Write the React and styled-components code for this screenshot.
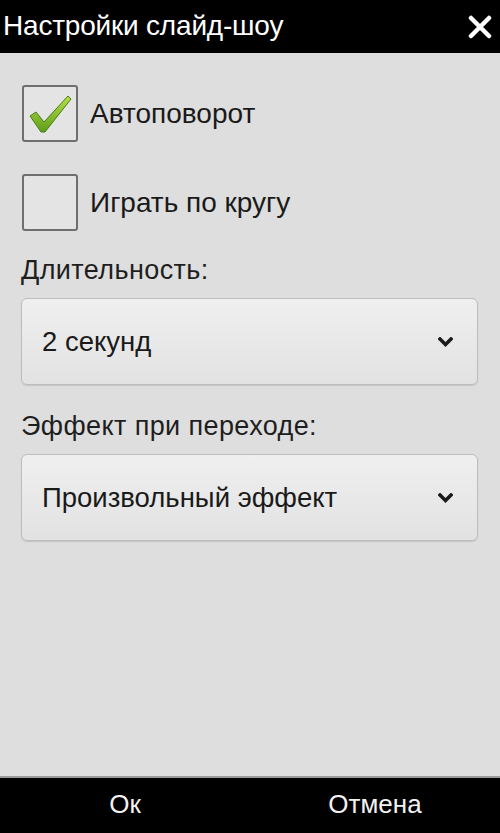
import React from 'react';
import styled, { createGlobalStyle } from 'styled-components';

const Global = createGlobalStyle`
    html, body {
        margin: 0;
        padding: 0;
        background: #dedede;
    }
    body {
        font-family: "Liberation Sans", Arial, sans-serif;
    }
`

const Screen = styled.div`
    width: 500px;
    height: 833px;
    display: flex;
    flex-direction: column;
    background: #dedede;
    overflow: hidden;
`

const TitleBar = styled.div`
    height: 53px;
    background: #000;
    display: flex;
    align-items: center;
    justify-content: space-between;
    padding: 0 8px 0 3px;
    color: #fff;
`

const Title = styled.div`
    font-size: 28px;
    letter-spacing: -0.2px;
    padding-bottom: 2px;
`

const Close = styled.button`
    background: none;
    border: none;
    padding: 0;
    width: 24px;
    height: 24px;
    display: flex;
`

const Body = styled.div`
    flex: 1;
    display: flex;
    flex-direction: column;
    padding: 32px 22px 0 21px;
`

const CheckRow = styled.label`
    display: flex;
    align-items: center;
    gap: 12px;
    margin-bottom: ${p => p.$last ? '23px' : '32px'};
    font-size: 28px;
    color: #1a1a1a;
`

const Box = styled.span`
    width: 52px;
    height: 53px;
    border: 2px solid #6f6f6f;
    border-radius: 3px;
    background: #e4e4e4;
    display: flex;
    align-items: center;
    justify-content: center;
    box-sizing: content-box;
    margin-left: 1px;
`

const Caption = styled.div`
    font-size: 27px;
    letter-spacing: 0.4px;
    line-height: 32px;
    color: #1e1e1e;
    margin: 0 0 ${p => p.$gap || 12}px 0;
`

const Select = styled.div`
    height: 85px;
    border: 1px solid #bdbdbd;
    border-radius: 6px;
    background: linear-gradient(#efefef, #e6e6e6 70%, #e2e2e2);
    box-shadow: 0 1px 1px rgba(0,0,0,0.12);
    display: flex;
    align-items: center;
    justify-content: space-between;
    padding: 0 24px 0 20px;
    font-size: 27.5px;
    color: #1a1a1a;
    margin-bottom: ${p => p.$mb || 0}px;
`

const BottomBar = styled.div`
    height: 55px;
    background: #000;
    border-top: 2px solid #9a9a9a;
    display: grid;
    grid-template-columns: 1fr 1fr;
    align-items: center;
`

const BarButton = styled.button`
    background: none;
    border: none;
    color: #f2f2f2;
    font-family: inherit;
    font-size: 26px;
    padding: 0 0 2px 0;
`

function Check() {
    return (
        <svg width="46" height="42" viewBox="0 0 46 42">
            <defs>
                <linearGradient id="g" x1="0" y1="0" x2="0" y2="1">
                    <stop offset="0" stopColor="#b8e04a" />
                    <stop offset="1" stopColor="#5e9e1a" />
                </linearGradient>
            </defs>
            <path d="M3 23 L9 19 L17 29 L41 3 L44 6 L18 39 L14 39 Z" fill="url(#g)" stroke="#4d7d17" strokeWidth="1" strokeLinejoin="round" />
        </svg>
    )
}

function Chevron() {
    return (
        <svg width="15" height="10" viewBox="0 0 15 10">
            <path d="M2 2 L7.5 7.5 L13 2" fill="none" stroke="#1a1a1a" strokeWidth="3.5" strokeLinecap="square" />
        </svg>
    )
}

export default function App() {
    return (
        <Screen>
            <Global />
            <TitleBar>
                <Title>Настройки слайд-шоу</Title>
                <Close>
                    <svg width="24" height="24" viewBox="0 0 24 24">
                        <path d="M3 3 L21 21 M21 3 L3 21" stroke="#fff" strokeWidth="4.5" strokeLinecap="round" />
                    </svg>
                </Close>
            </TitleBar>
            <Body>
                <CheckRow>
                    <Box><Check /></Box>
                    Автоповорот
                </CheckRow>
                <CheckRow $last>
                    <Box />
                    Играть по кругу
                </CheckRow>
                <Caption>Длительность:</Caption>
                <Select $mb={25}>
                    2 секунд
                    <Chevron />
                </Select>
                <Caption $gap={12}>Эффект при переходе:</Caption>
                <Select>
                    Произвольный эффект
                    <Chevron />
                </Select>
            </Body>
            <BottomBar>
                <BarButton>Ок</BarButton>
                <BarButton>Отмена</BarButton>
            </BottomBar>
        </Screen>
    )
}
